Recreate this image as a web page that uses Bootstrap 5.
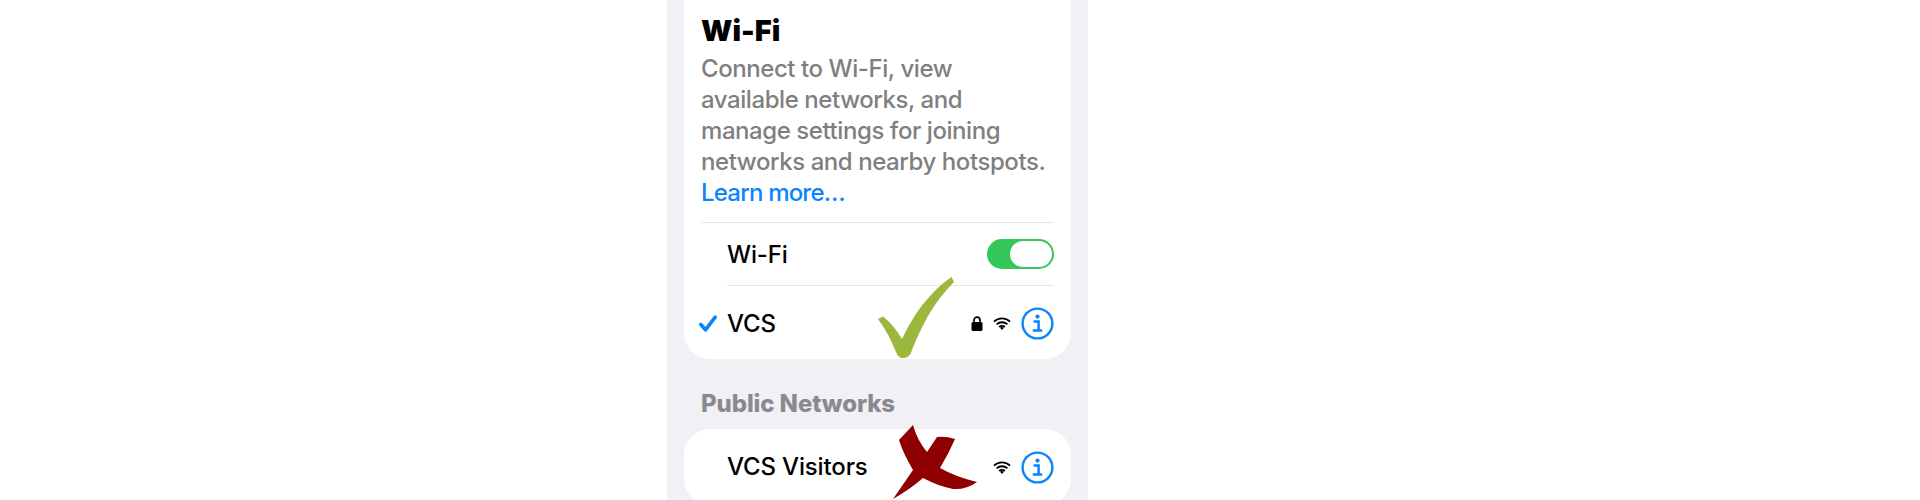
<!DOCTYPE html>
<html lang="en">
<head>
    <meta charset="UTF-8">
    <meta name="viewport" content="width=device-width, initial-scale=1">
    <title>Wi-Fi</title>
    <link href="https://cdn.jsdelivr.net/npm/bootstrap@5.3.0/dist/css/bootstrap.min.css" rel="stylesheet">
    <style>
        html, body { height: 500px; overflow: hidden; background: #fff; }
        body { font-family: Inter, "Liberation Sans", sans-serif; color: #000; }

        .phone-panel { width: 421px; margin-left: 667px; height: 500px; background: #f0f0f5; padding: 0 17px; overflow: hidden; }
        .group-box { background: #fff; }
        .group-top { height: 359px; border-radius: 0 0 26px 26px; padding: 11px 17px 0; }
        .group-bottom { height: 76px; border-radius: 26px; padding: 0 17px; }

        .wifi-title { font-size: 29px; font-weight: 900; line-height: 38px; margin: 1px 0 3px; }
        .wifi-desc { font-size: 24px; font-weight: 500; line-height: 31px; color: #7f7f7f; margin: 0; white-space: nowrap; letter-spacing: -.43px; }
        .wifi-desc a { color: #0a84ff; text-decoration: none; letter-spacing: -.8px; }

        .net-row { font-size: 24px; font-weight: 500; letter-spacing: -.15px; }
        .row-toggle { height: 63px; margin-top: 14px; border-top: 1px solid #e6e6e8; }
        .row-toggle-label { margin-left: 26px; padding-top: 2px; }
        .row-current { height: 75px; }
        .row-visitors { height: 76px; }
        .row-name { width: 28px; margin-left: -2px; flex: none; }
        .row-line { border-top: 1px solid #e6e6e8; margin-left: 26px; }

        .ios-switch { width: 67px; height: 30px; border-radius: 15px; background: #34c759; padding: 2px; display: flex; justify-content: flex-end; }
        .ios-switch i { display: block; width: 42px; height: 26px; border-radius: 13px; background: #fff; }

        .section-head { font-size: 24px; font-weight: 800; color: #8a8a8e; line-height: 30px; margin: 30px 0 10px 17px; letter-spacing: -.1px; }

        .status-icons { gap: 10px; }
        .mark-over { position: absolute; left: 0; top: 0; display: block; pointer-events: none; }
    </style>
</head>
<body>
    <div class="phone-panel">
        <div class="group-box group-top">
            <h1 class="wifi-title">Wi-Fi</h1>
            <p class="wifi-desc">Connect to Wi-Fi, view<br>available networks, and<br>manage settings for joining<br>networks and nearby hotspots.<br><a href="#">Learn more…</a></p>

            <div class="net-row row-toggle d-flex align-items-center justify-content-between">
                <span class="row-toggle-label">Wi-Fi</span>
                <span class="ios-switch"><i></i></span>
            </div>
            <div class="row-line"></div>
            <div class="net-row row-current d-flex align-items-center">
                <span class="row-name">
                    <svg width="18" height="17" viewBox="0 0 18 17" class="d-block"><path d="M1.8 9.500 L6.500 14.800 L16.200 2.200" fill="none" stroke="#0a84ff" stroke-width="3.600" stroke-linecap="round" stroke-linejoin="round"/></svg>
                </span>
                <span>VCS</span>
                <span class="status-icons d-flex align-items-center ms-auto">
                    <svg width="12" height="15" viewBox="0 0 12 15"><path d="M3 6.500V4.200a3 3 0 0 1 6 0v2.300" fill="none" stroke="#000" stroke-width="1.700"/><rect x="0.500" y="6" width="11" height="9" rx="1.600" fill="#000"/></svg>
                    <svg width="18" height="13" viewBox="0 0 18 13"><path d="M1 4.600a11.500 11.500 0 0 1 16 0M3.600 7.400a7.800 7.800 0 0 1 10.800 0M6.200 10a4 4 0 0 1 5.600 0" fill="none" stroke="#000" stroke-width="1.900"/><path d="M9 13l-2-2.200a3 3 0 0 1 4 0z" fill="#000"/></svg>
                    <svg width="33" height="33" viewBox="0 0 33 33"><circle cx="16.500" cy="16.500" r="14.900" fill="none" stroke="#0a84ff" stroke-width="2.400"/><circle cx="16.500" cy="9.600" r="2.100" fill="#0a84ff"/><path d="M12.600 14.400h5v8.200M11.800 23.400h9.400" fill="none" stroke="#0a84ff" stroke-width="2.500"/></svg>
                </span>
            </div>
        </div>

        <div class="section-head">Public Networks</div>

        <div class="group-box group-bottom">
            <div class="net-row row-visitors d-flex align-items-center">
                <span class="row-name"></span>
                <span>VCS Visitors</span>
                <span class="status-icons d-flex align-items-center ms-auto">
                    <svg width="18" height="13" viewBox="0 0 18 13"><path d="M1 4.600a11.500 11.500 0 0 1 16 0M3.600 7.400a7.800 7.800 0 0 1 10.800 0M6.200 10a4 4 0 0 1 5.600 0" fill="none" stroke="#000" stroke-width="1.900"/><path d="M9 13l-2-2.200a3 3 0 0 1 4 0z" fill="#000"/></svg>
                    <svg width="33" height="33" viewBox="0 0 33 33"><circle cx="16.500" cy="16.500" r="14.900" fill="none" stroke="#0a84ff" stroke-width="2.400"/><circle cx="16.500" cy="9.600" r="2.100" fill="#0a84ff"/><path d="M12.600 14.400h5v8.200M11.800 23.400h9.400" fill="none" stroke="#0a84ff" stroke-width="2.500"/></svg>
                </span>
            </div>
        </div>
    </div>

    <!-- hand drawn marks lying over the screenshot -->
    <svg class="mark-over" width="1920" height="500" viewBox="0 0 1920 500">
        <path d="M878 319 L883 316.500 Q893 324 902 339 Q914 313 930 296 Q941 284 951.500 277 L954 282 Q939 297 928 316 Q917 336 910.500 354 Q907 358.500 903 358 Q898 358 896 352 Q889 334 878 319Z" fill="#9cb83c"/>
        <path d="M913 425 L899 440 Q903 453 913 470 L893 499 Q909 490 923 478 Q938 486 953 489 Q966 490 977 482 Q956 477 940 468 Q949 453 955 439 Q946 436 937 437 L927 452 Q917 440 913 425Z" fill="#8f0000"/>
    </svg>

    <script src="https://cdn.jsdelivr.net/npm/bootstrap@5.3.0/dist/js/bootstrap.bundle.min.js"></script>
</body>
</html>
